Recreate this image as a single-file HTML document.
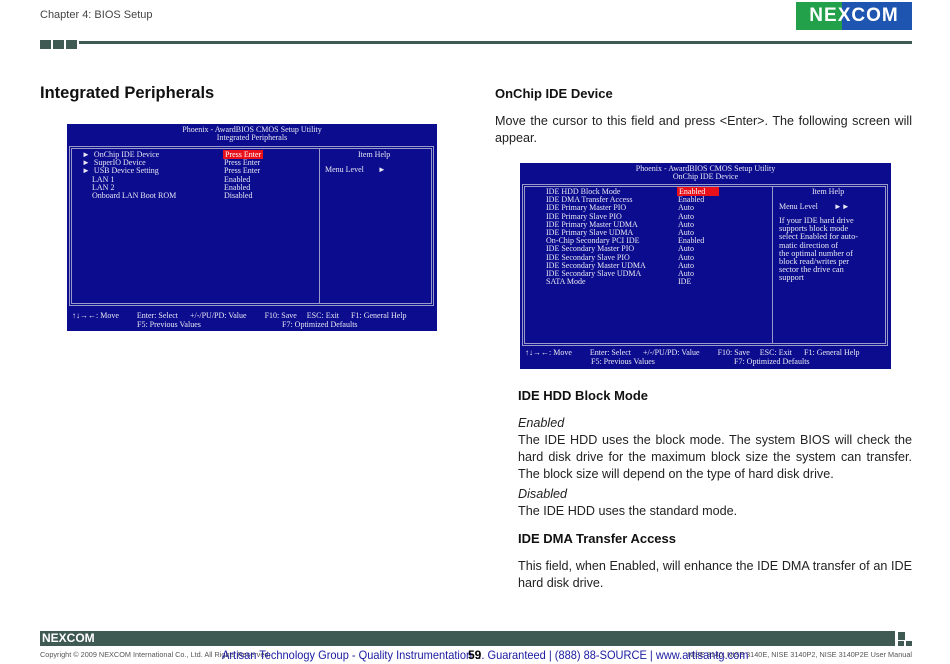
<!DOCTYPE html>
<html><head><meta charset="utf-8"><style>
*{margin:0;padding:0;box-sizing:border-box}
body{width:950px;height:664px;background:#fff;position:relative;overflow:hidden;font-family:"Liberation Sans","DejaVu Sans",sans-serif;color:#222}
.a{position:absolute;white-space:nowrap}
.bios{position:absolute;background:#0c0c8e;color:#e8e8f4;font-family:"Liberation Serif",serif;font-size:8px;line-height:8.2px}
.bios .a{line-height:8.2px}
.fr{position:absolute;border:1px solid #9a9ac8}
.dv{position:absolute;width:1px;background:#9a9ac8}
.hl{background:#e8101a;color:#fff;padding:0 2px;margin-left:-1px}
.p{position:absolute;font-size:12.6px;line-height:17px;text-align:justify;color:#222}
.h{position:absolute;font-weight:bold;font-size:13px;color:#111}
</style></head><body>
<div class="a" style="left:40px;top:9px;font-size:11px;color:#444">Chapter 4: BIOS Setup</div>
<div class="a" style="left:40px;top:40px;width:11px;height:9px;background:#3e5a52"></div>
<div class="a" style="left:53px;top:40px;width:11px;height:9px;background:#3e5a52"></div>
<div class="a" style="left:66px;top:40px;width:11px;height:9px;background:#3e5a52"></div>
<div class="a" style="left:79px;top:41px;width:833px;height:3px;background:#3e5a52"></div>
<div class="a" style="left:796px;top:2px;width:116px;height:28px;background:#1d55b0"></div>
<div class="a" style="left:796px;top:2px;width:46px;height:28px;background:#23a04a"></div>
<div class="a" style="left:796px;top:2px;width:116px;height:28px;color:#fff;font-weight:bold;font-size:19px;line-height:28px;text-align:center;letter-spacing:1px">NEXCOM</div>

<div class="a" style="left:40px;top:84px;font-size:16.5px;font-weight:bold;color:#111">Integrated Peripherals</div>

<div class="bios" style="left:67px;top:124px;width:370px;height:207px">
 <div class="a" style="left:0;width:370px;top:2px;text-align:center">Phoenix - AwardBIOS CMOS Setup Utility<br>Integrated Peripherals</div>
 <div class="fr" style="left:2px;top:22px;width:365px;height:160px"></div>
 <div class="fr" style="left:4px;top:24px;width:361px;height:156px"></div>
 <div class="dv" style="left:252px;top:24px;height:156px"></div>
 <div class="a" style="left:15px;top:27px">►&nbsp; OnChip IDE Device<br>►&nbsp; SuperIO Device<br>►&nbsp; USB Device Setting<br>&nbsp;&nbsp;&nbsp;&nbsp; LAN 1<br>&nbsp;&nbsp;&nbsp;&nbsp; LAN 2<br>&nbsp;&nbsp;&nbsp;&nbsp; Onboard LAN Boot ROM</div>
 <div class="a" style="left:157px;top:27px"><span class="hl">Press Enter</span><br>Press Enter<br>Press Enter<br>Enabled<br>Enabled<br>Disabled</div>
 <div class="a" style="left:291px;top:27px">Item Help</div>
 <div class="a" style="left:258px;top:42px">Menu Level&nbsp;&nbsp;&nbsp;&nbsp;&nbsp;&nbsp;&nbsp;►</div>
 <div class="a" style="left:5px;top:188px">↑↓→←: Move&nbsp;&nbsp;&nbsp;&nbsp;&nbsp;&nbsp;&nbsp;&nbsp; Enter: Select&nbsp;&nbsp;&nbsp;&nbsp;&nbsp; +/-/PU/PD: Value&nbsp;&nbsp;&nbsp;&nbsp;&nbsp;&nbsp;&nbsp;&nbsp; F10: Save&nbsp;&nbsp;&nbsp;&nbsp; ESC: Exit&nbsp;&nbsp;&nbsp;&nbsp;&nbsp; F1: General Help</div>
 <div class="a" style="left:70px;top:197px">F5: Previous Values</div>
 <div class="a" style="left:215px;top:197px">F7: Optimized Defaults</div>
</div>

<div class="h" style="left:495px;top:86px">OnChip IDE Device</div>
<div class="p" style="left:495px;top:113px;width:417px">Move the cursor to this field and press &lt;Enter&gt;. The following screen will appear.</div>

<div class="bios" style="left:520px;top:163px;width:371px;height:206px">
 <div class="a" style="left:0;width:371px;top:2px;text-align:center">Phoenix - AwardBIOS CMOS Setup Utility<br>OnChip IDE Device</div>
 <div class="fr" style="left:2px;top:21px;width:366px;height:162px"></div>
 <div class="fr" style="left:4px;top:23px;width:362px;height:158px"></div>
 <div class="dv" style="left:252px;top:23px;height:158px"></div>
 <div class="a" style="left:26px;top:25px">IDE HDD Block Mode<br>IDE DMA Transfer Access<br>IDE Primary Master PIO<br>IDE Primary Slave PIO<br>IDE Primary Master UDMA<br>IDE Primary Slave UDMA<br>On-Chip Secondary PCI IDE<br>IDE Secondary Master PIO<br>IDE Secondary Slave PIO<br>IDE Secondary Master UDMA<br>IDE Secondary Slave UDMA<br>SATA Mode</div>
 <div class="a" style="left:158px;top:25px"><span class="hl" style="padding-right:14px">Enabled</span><br>Enabled<br>Auto<br>Auto<br>Auto<br>Auto<br>Enabled<br>Auto<br>Auto<br>Auto<br>Auto<br>IDE</div>
 <div class="a" style="left:292px;top:25px">Item Help</div>
 <div class="a" style="left:259px;top:40px">Menu Level&nbsp;&nbsp;&nbsp;&nbsp;&nbsp;&nbsp;&nbsp; ►►</div>
 <div class="a" style="left:259px;top:54px;font-size:8.3px">If your IDE hard drive<br>supports block mode<br>select Enabled for auto-<br>matic direction of<br>the optimal number of<br>block read/writes per<br>sector the drive can<br>support</div>
 <div class="a" style="left:5px;top:186px">↑↓→←: Move&nbsp;&nbsp;&nbsp;&nbsp;&nbsp;&nbsp;&nbsp;&nbsp; Enter: Select&nbsp;&nbsp;&nbsp;&nbsp;&nbsp; +/-/PU/PD: Value&nbsp;&nbsp;&nbsp;&nbsp;&nbsp;&nbsp;&nbsp;&nbsp; F10: Save&nbsp;&nbsp;&nbsp;&nbsp; ESC: Exit&nbsp;&nbsp;&nbsp;&nbsp;&nbsp; F1: General Help</div>
 <div class="a" style="left:71px;top:195px">F5: Previous Values</div>
 <div class="a" style="left:214px;top:195px">F7: Optimized Defaults</div>
</div>

<div class="h" style="left:518px;top:388px">IDE HDD Block Mode</div>
<div class="p" style="left:518px;top:415px;width:394px"><i>Enabled</i><br>The IDE HDD uses the block mode. The system BIOS will check the hard disk drive for the maximum block size the system can transfer. The block size will depend on the type of hard disk drive.</div>
<div class="p" style="left:518px;top:486px;width:394px"><i>Disabled</i><br>The IDE HDD uses the standard mode.</div>
<div class="h" style="left:518px;top:531px">IDE DMA Transfer Access</div>
<div class="p" style="left:518px;top:558px;width:394px">This field, when Enabled, will enhance the IDE DMA transfer of an IDE hard disk drive.</div>

<div class="a" style="left:40px;top:631px;width:855px;height:15px;background:#3e5a52"></div>
<div class="a" style="left:42px;top:631px;color:#fff;font-weight:bold;font-size:12px;line-height:15px">NEXCOM</div>
<div class="a" style="left:898px;top:632px;width:7px;height:8px;background:#3e5a52"></div>
<div class="a" style="left:898px;top:641px;width:6px;height:5px;background:#3e5a52"></div>
<div class="a" style="left:906px;top:641px;width:6px;height:5px;background:#3e5a52"></div>
<div class="a" style="left:40px;top:650px;font-size:7.3px;color:#555">Copyright © 2009 NEXCOM International Co., Ltd. All Rights Reserved.</div>
<div class="a" style="right:38px;top:650px;font-size:7.3px;color:#555">NISE 3140, NISE 3140E, NISE 3140P2, NISE 3140P2E User Manual</div>
<div class="a" style="left:222px;top:648px;font-size:12px;color:#1a1aa0;transform:scaleX(0.92);transform-origin:left top">Artisan Technology Group - Quality Instrumentation ... Guaranteed | (888) 88-SOURCE | www.artisantg.com</div>
<div class="a" style="left:468px;top:648px;font-size:12px;color:#000;font-weight:bold">59</div>
</body></html>
